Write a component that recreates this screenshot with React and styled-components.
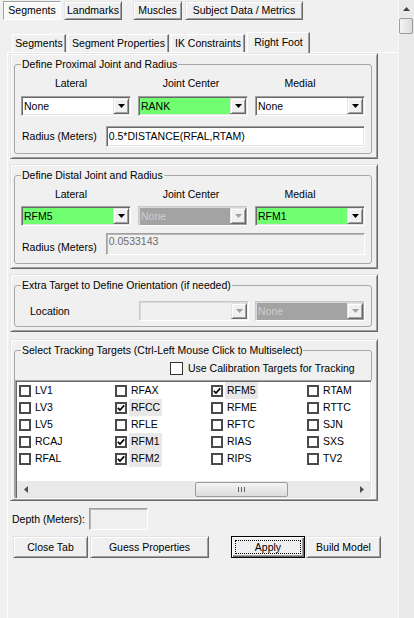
import React from 'react';
import styled, { createGlobalStyle, css } from 'styled-components';

const GlobalStyle = createGlobalStyle`
  html, body {
    margin: 0;
    padding: 0;
    background: #f0f0f0;
  }
  body {
    font-family: "Liberation Sans", Arial, sans-serif;
    font-size: 10.5px;
    line-height: 13px;
    color: #000;
  }
`;

const raised = css`
  border: 1px solid;
  border-color: #e3e3e3 #696969 #696969 #e3e3e3;
  box-shadow: inset 1px 1px 0 #fff, inset -1px -1px 0 #a0a0a0;
`;

const sunken = css`
  border: 1px solid;
  border-color: #a0a0a0 #fff #fff #a0a0a0;
  box-shadow: inset 1px 1px 0 #696969, inset -1px -1px 0 #e3e3e3;
`;

const Window = styled.div`
  display: flex;
  width: 414px;
  height: 618px;
  overflow: hidden;
  background: #f0f0f0;
`;

const Main = styled.div`
  width: 399px;
  display: flex;
  flex-direction: column;
`;

const TopTabBar = styled.div`
  display: flex;
  padding: 1px 0 0 3px;
  height: 19px;
`;

const TopTab = styled.div`
  box-sizing: border-box;
  width: ${p => p.$w}px;
  margin-left: ${p => p.$ml || 0}px;
  height: 19px;
  display: flex;
  align-items: center;
  justify-content: center;
  background: #f0f0f0;
  ${raised}
  ${p => p.$active && css`
    background: #f8f8f8;
    border-color: #a0a0a0 #ffffff #ffffff #a0a0a0;
    box-shadow: inset 1px 1px 0 #fff;
  `}
`;

const SubTabBar = styled.div`
  display: flex;
  align-items: flex-end;
  gap: 2px;
  height: 20px;
  margin-top: 12px;
  padding-left: 12px;
`;

const SubTab = styled.div`
  box-sizing: border-box;
  width: ${p => p.$w}px;
  height: 18px;
  display: flex;
  align-items: center;
  justify-content: center;
  background: #f0f0f0;
  border-top: 1px solid #fff;
  border-left: 1px solid #fff;
  border-right: 1px solid #696969;
  box-shadow: inset -1px 0 0 #a0a0a0;
  ${p => p.$active && css`
    position: relative;
    z-index: 1;
    height: 21px;
    margin-bottom: -1px;
    padding-bottom: 2px;
  `}
`;

const TabPanel = styled.div`
  flex: 1;
  box-sizing: border-box;
  margin-left: 7px;
  border-top: 1px solid #fff;
  border-left: 1px solid #fff;
  padding-left: 2px;
`;

const Section = styled.div`
  box-sizing: border-box;
  width: 368px;
  margin-top: ${p => p.$mt || 0}px;
  padding: 4px 5px ${p => (p.$pb === undefined ? 4 : p.$pb)}px 3px;
  ${raised}
`;

const Group = styled.fieldset`
  margin: 0;
  padding: 0 6px ${p => (p.$pb === undefined ? 6 : p.$pb)}px;
  border: 1px solid #a8a8a8;
  border-radius: 3px;
  min-inline-size: 0;
`;

const Legend = styled.legend`
  padding: 0 1px;
  margin: 0;
  line-height: 13px;
`;

const Row = styled.div`
  display: flex;
  align-items: center;
  gap: ${p => p.$gap || 0}px;
  margin-top: ${p => p.$mt || 0}px;
`;

const ColLabel = styled.div`
  width: ${p => p.$w}px;
  text-align: center;
`;

const FieldLabel = styled.div`
  box-sizing: border-box;
  width: ${p => p.$w}px;
  padding-left: ${p => p.$pl || 1}px;
  padding-top: ${p => p.$pt || 0}px;
`;

const Combo = styled.div`
  box-sizing: border-box;
  width: 110px;
  height: 20px;
  display: flex;
  padding: 1px;
  background: ${p => p.$bg || '#fff'};
  ${sunken}
  ${p => p.$disabled && css`
    border-color: #c8c8c8 #fff #fff #c8c8c8;
    box-shadow: inset 1px 1px 0 #d8d8d8;
  `}
`;

const ComboText = styled.span`
  flex: 1;
  padding-left: 1px;
  line-height: 16px;
  color: ${p => (p.$disabled ? '#cdcdcd' : '#000')};
`;

const ComboButton = styled.span`
  box-sizing: border-box;
  width: 16px;
  display: flex;
  align-items: center;
  justify-content: center;
  background: #f0f0f0;
  ${raised}
  svg {
    display: block;
    fill: ${p => (p.$disabled ? '#a0a0a0' : '#000')};
  }
`;

const TextBox = styled.div`
  box-sizing: border-box;
  width: ${p => p.$w}px;
  height: ${p => p.$h || 21}px;
  display: flex;
  align-items: ${p => (p.$disabled ? 'flex-start' : 'center')};
  padding: ${p => (p.$disabled ? '1px 2px' : '0 2px')};
  background: ${p => (p.$disabled ? '#f0f0f0' : '#fff')};
  color: ${p => (p.$disabled ? '#6d6d6d' : '#000')};
  ${sunken}
  ${p => p.$disabled && css`
    box-shadow: inset 1px 1px 0 #b8b8b8;
  `}
`;

const CheckRow = styled.label`
  display: flex;
  align-items: center;
  height: 14px;
  margin: 4px 0 0 149px;
  gap: 5px;
`;

const PlainBox = styled.span`
  box-sizing: border-box;
  width: 13px;
  height: 13px;
  background: #fff;
  border: 1px solid #333;
`;

const ListBox = styled.div`
  box-sizing: border-box;
  height: 119px;
  margin: 5px -7px -1px -6px;
  padding: 1px;
  display: flex;
  flex-direction: column;
  background: #fff;
  ${sunken}
`;

const ListGrid = styled.div`
  flex: 1;
  display: grid;
  grid-template-rows: repeat(5, 17px);
  grid-auto-flow: column;
  grid-auto-columns: 96px;
  align-content: start;
`;

const Item = styled.div`
  display: flex;
  align-items: center;
  padding-left: 2px;
`;

const ItemBox = styled.span`
  box-sizing: border-box;
  width: 12px;
  height: 12px;
  border: 2px solid #4a4a4a;
  background: #fff;
  display: flex;
  align-items: center;
  justify-content: center;
  svg {
    display: block;
  }
`;

const ItemText = styled.span`
  margin-left: 2px;
  padding: 0 2px;
  height: 17px;
  line-height: 17px;
  background: ${p => (p.$selected ? '#e8e8e8' : 'transparent')};
`;

const HScroll = styled.div`
  height: 16px;
  display: flex;
  background: #e9e9e9;
`;

const ArrowCell = styled.span`
  width: 17px;
  display: flex;
  align-items: center;
  justify-content: center;
  svg {
    display: block;
    fill: #505050;
  }
`;

const Track = styled.div`
  flex: 1;
  display: flex;
  align-items: center;
`;

const HThumb = styled.div`
  box-sizing: border-box;
  margin-left: ${p => p.$offset}px;
  width: ${p => p.$size}px;
  height: 15px;
  border: 1px solid #9c9c9c;
  border-radius: 2px;
  background: linear-gradient(#f4f4f4, #dcdcdc);
  display: flex;
  align-items: center;
  justify-content: center;
  gap: 2px;
`;

const Grip = styled.span`
  width: 1px;
  height: 5px;
  background: #606060;
`;

const DepthRow = styled.div`
  display: flex;
  align-items: center;
  margin: 7px 0 0 2px;
  gap: 4px;
`;

const ButtonRow = styled.div`
  display: flex;
  margin: 6px 0 0 3px;
`;

const Button = styled.button`
  box-sizing: border-box;
  width: ${p => p.$w}px;
  height: 22px;
  margin: 0 0 0 ${p => p.$ml || 0}px;
  padding: 0;
  font: inherit;
  color: #000;
  background: #f0f0f0;
  ${raised}
  ${p => p.$default && css`
    border-color: #000;
    box-shadow: inset 1px 1px 0 #fff, inset -1px -1px 0 #696969, inset -2px -2px 0 #a0a0a0;
    outline: 1px dotted #000;
    outline-offset: -5px;
  `}
`;

const VScroll = styled.div`
  width: 15px;
  height: 618px;
  display: flex;
  flex-direction: column;
  background: #e9e9e9;
  border-left: 1px solid #f8f8f8;
`;

const UpArrow = styled.div`
  height: 17px;
  display: flex;
  align-items: center;
  justify-content: center;
  svg {
    display: block;
    fill: #404040;
  }
`;

const VThumb = styled.div`
  box-sizing: border-box;
  height: 16px;
  margin: 1px 1px 0 0;
  border: 1px solid #9c9c9c;
  border-radius: 2px;
  background: linear-gradient(90deg, #f4f4f4, #dcdcdc);
`;

const Down = ({ disabled }) => (
  <ComboButton $disabled={disabled}>
    <svg width="7" height="4" viewBox="0 0 7 4"><path d="M0 0h7L3.5 4z" /></svg>
  </ComboButton>
);

const Dropdown = ({ value, bg, disabled }) => (
  <Combo $bg={bg} $disabled={disabled}>
    <ComboText $disabled={disabled}>{value}</ComboText>
    <Down disabled={disabled} />
  </Combo>
);

const GREEN = '#70ff70';

const targets = [
  ['LV1', 'LV3', 'LV5', 'RCAJ', 'RFAL'],
  ['RFAX', 'RFCC', 'RFLE', 'RFM1', 'RFM2'],
  ['RFM5', 'RFME', 'RFTC', 'RIAS', 'RIPS'],
  ['RTAM', 'RTTC', 'SJN', 'SXS', 'TV2'],
].flat();

const checked = ['RFCC', 'RFM1', 'RFM2', 'RFM5'];

const Tick = () => (
  <svg width="8" height="8" viewBox="0 0 8 8">
    <path d="M0.8 3.8 L3 6 L7.2 1.4" fill="none" stroke="#000" strokeWidth="1.7" />
  </svg>
);

export default function App() {
  return (
    <>
      <GlobalStyle />
      <Window>
        <Main>
          <TopTabBar>
            <TopTab $w={58} $active>Segments</TopTab>
            <TopTab $w={58} $ml={3}>Landmarks</TopTab>
            <TopTab $w={49} $ml={11}>Muscles</TopTab>
            <TopTab $w={118} $ml={3}>Subject Data / Metrics</TopTab>
          </TopTabBar>

          <SubTabBar>
            <SubTab $w={54}>Segments</SubTab>
            <SubTab $w={101}>Segment Properties</SubTab>
            <SubTab $w={74}>IK Constraints</SubTab>
            <SubTab $w={63} $active>Right Foot</SubTab>
          </SubTabBar>

          <TabPanel>
            <Section>
              <Group>
                <Legend>Define Proximal Joint and Radius</Legend>
                <Row $mt={6}>
                  <ColLabel $w={100}>Lateral</ColLabel>
                  <ColLabel $w={140}>Joint Center</ColLabel>
                  <ColLabel $w={78}>Medial</ColLabel>
                </Row>
                <Row $mt={6} $gap={7}>
                  <Dropdown value="None" />
                  <Dropdown value="RANK" bg={GREEN} />
                  <Dropdown value="None" />
                </Row>
                <Row $mt={10}>
                  <FieldLabel $w={85}>Radius (Meters)</FieldLabel>
                  <TextBox $w={260}>0.5*DISTANCE(RFAL,RTAM)</TextBox>
                </Row>
              </Group>
            </Section>

            <Section $mt={5}>
              <Group $pb={8}>
                <Legend>Define Distal Joint and Radius</Legend>
                <Row $mt={6}>
                  <ColLabel $w={100}>Lateral</ColLabel>
                  <ColLabel $w={140}>Joint Center</ColLabel>
                  <ColLabel $w={78}>Medial</ColLabel>
                </Row>
                <Row $mt={5} $gap={7}>
                  <Dropdown value="RFM5" bg={GREEN} />
                  <Dropdown value="None" bg="#a3a3a3" disabled />
                  <Dropdown value="RFM1" bg={GREEN} />
                </Row>
                <Row $mt={7}>
                  <FieldLabel $w={85} $pt={6}>Radius (Meters)</FieldLabel>
                  <TextBox $w={260} $h={22} $disabled>0.0533143</TextBox>
                </Row>
              </Group>
            </Section>

            <Section $mt={5}>
              <Group $pb={5}>
                <Legend>Extra Target to Define Orientation (if needed)</Legend>
                <Row $mt={9}>
                  <FieldLabel $w={118} $pl={9}>Location</FieldLabel>
                  <Dropdown value="" bg="#f0f0f0" disabled />
                  <FieldLabel $w={6} $pl={0} />
                  <Dropdown value="None" bg="#a3a3a3" disabled />
                </Row>
              </Group>
            </Section>

            <Section $mt={7} $pb={1}>
              <Group $pb={0}>
                <Legend>Select Tracking Targets (Ctrl-Left Mouse Click to Multiselect)</Legend>
                <CheckRow>
                  <PlainBox />
                  Use Calibration Targets for Tracking
                </CheckRow>
                <ListBox>
                  <ListGrid>
                    {targets.map(t => {
                      const on = checked.includes(t);
                      return (
                        <Item key={t}>
                          <ItemBox>{on && <Tick />}</ItemBox>
                          <ItemText $selected={on}>{t}</ItemText>
                        </Item>
                      );
                    })}
                  </ListGrid>
                  <HScroll>
                    <ArrowCell>
                      <svg width="4" height="7" viewBox="0 0 4 7"><path d="M4 0v7L0 3.5z" /></svg>
                    </ArrowCell>
                    <Track>
                      <HThumb $offset={161} $size={93}>
                        <Grip />
                        <Grip />
                        <Grip />
                      </HThumb>
                    </Track>
                    <ArrowCell>
                      <svg width="4" height="7" viewBox="0 0 4 7"><path d="M0 0v7L4 3.5z" /></svg>
                    </ArrowCell>
                  </HScroll>
                </ListBox>
              </Group>
            </Section>

            <DepthRow>
              <span>Depth (Meters):</span>
              <TextBox $w={59} $h={22} $disabled />
            </DepthRow>

            <ButtonRow>
              <Button $w={75}>Close Tab</Button>
              <Button $w={119} $ml={2}>Guess Properties</Button>
              <Button $w={74} $ml={22} $default>Apply</Button>
              <Button $w={75} $ml={1}>Build Model</Button>
            </ButtonRow>
          </TabPanel>
        </Main>

        <VScroll>
          <UpArrow>
            <svg width="7" height="4" viewBox="0 0 7 4"><path d="M0 4h7L3.5 0z" /></svg>
          </UpArrow>
          <VThumb />
        </VScroll>
      </Window>
    </>
  );
}
